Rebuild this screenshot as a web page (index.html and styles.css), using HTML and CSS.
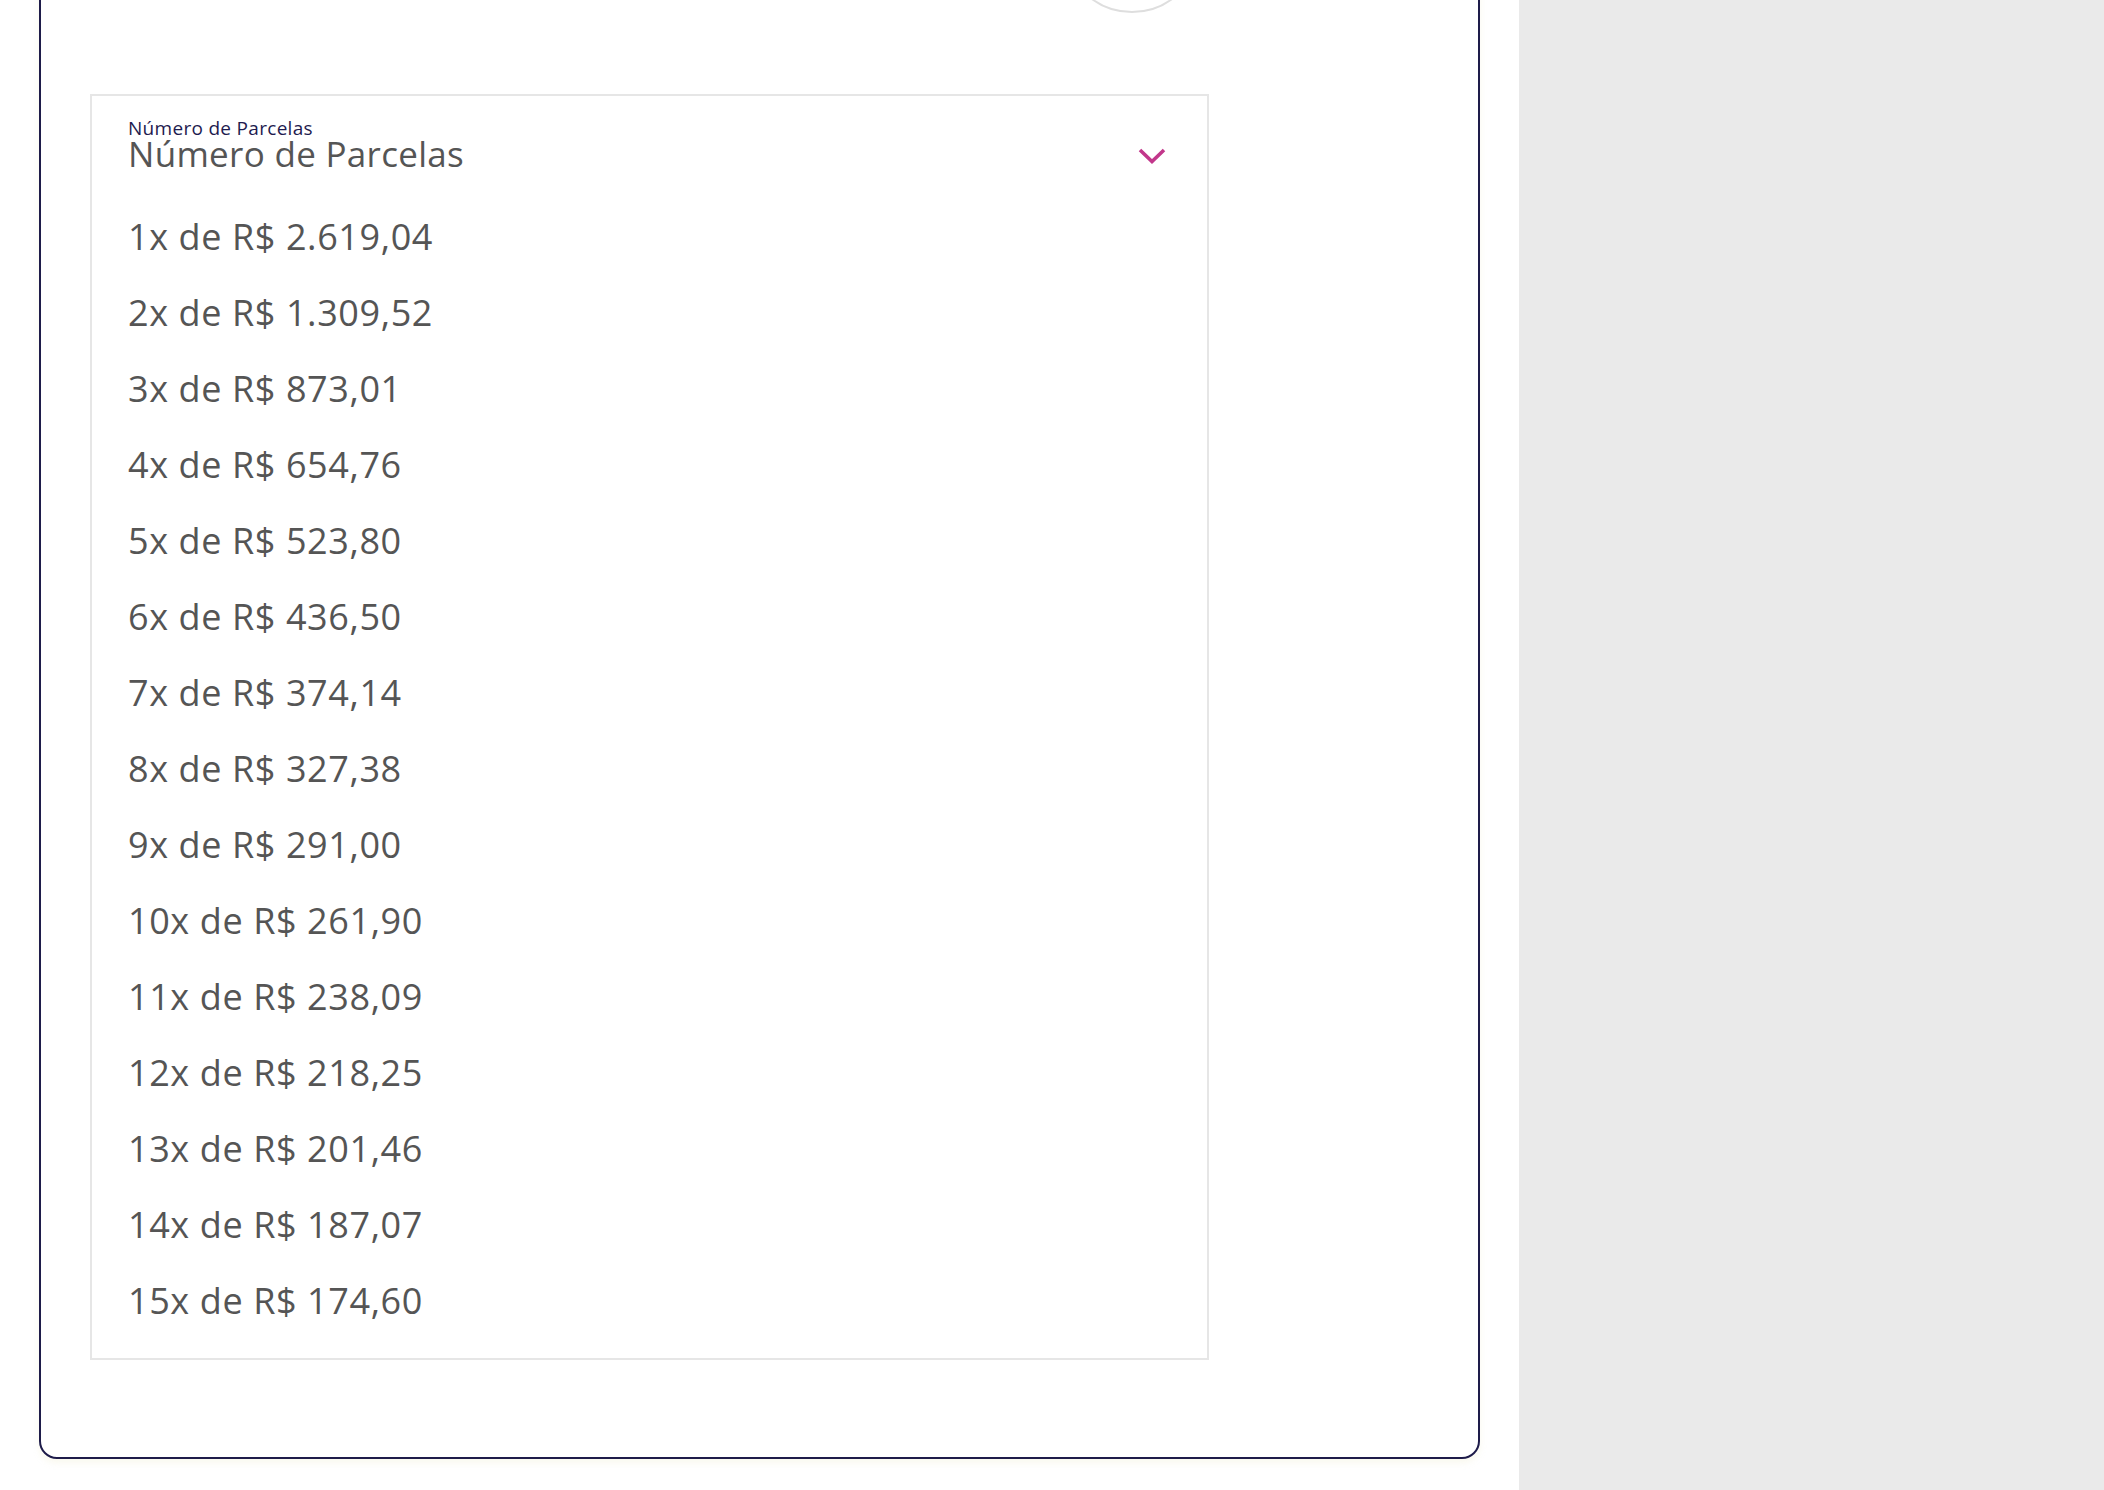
FILE: index.html
```html
<!DOCTYPE html>
<html lang="pt-BR">
<head>
    <meta charset="UTF-8">
    <meta name="viewport" content="width=device-width, initial-scale=1.0">
    <title>Pagamento - Número de Parcelas</title>
    <link rel="stylesheet" href="styles.css">
</head>
<body>
    <div class="page">
        <main class="main-column">
            <!-- Payment card -->
            <section class="payment-card">
                <div class="card-top">
                    <span class="card-badge"></span>
                </div>

                <!-- Installments dropdown (open) -->
                <div class="installments">
                    <div class="installments-header">
                        <div class="installments-labels">
                            <span class="label-small">Número de Parcelas</span>
                            <span class="label-value">Número de Parcelas</span>
                        </div>
                        <svg class="chevron" width="30" height="18" viewBox="0 0 30 18" aria-hidden="true">
                            <path d="M3 3 L15 14.5 L27 3" fill="none" stroke="#c2378b" stroke-width="3.6"/>
                        </svg>
                    </div>

                    <ul class="installments-list">
                        <li class="installment-option">1x de R$ 2.619,04</li>
                        <li class="installment-option">2x de R$ 1.309,52</li>
                        <li class="installment-option">3x de R$ 873,01</li>
                        <li class="installment-option">4x de R$ 654,76</li>
                        <li class="installment-option">5x de R$ 523,80</li>
                        <li class="installment-option">6x de R$ 436,50</li>
                        <li class="installment-option">7x de R$ 374,14</li>
                        <li class="installment-option">8x de R$ 327,38</li>
                        <li class="installment-option">9x de R$ 291,00</li>
                        <li class="installment-option">10x de R$ 261,90</li>
                        <li class="installment-option">11x de R$ 238,09</li>
                        <li class="installment-option">12x de R$ 218,25</li>
                        <li class="installment-option">13x de R$ 201,46</li>
                        <li class="installment-option">14x de R$ 187,07</li>
                        <li class="installment-option">15x de R$ 174,60</li>
                    </ul>
                </div>
            </section>
        </main>

        <!-- Order summary column -->
        <aside class="side-column"></aside>
    </div>
</body>
</html>
```

FILE: styles.css
```css
* {
    margin: 0;
    padding: 0;
    box-sizing: border-box;
}

body {
    font-family: 'Open Sans', 'Noto Sans', sans-serif;
    background: #ffffff;
    color: #555555;
}

.page {
    display: flex;
    height: 1490px;
    overflow: hidden;
}

.main-column {
    width: 1519px;
    flex-shrink: 0;
    padding: 0 39px;
    background: #ffffff;
}

.side-column {
    flex: 1;
    background: #eaeaea;
}

.payment-card {
    margin-top: -200px;
    border: 2px solid #1e1c4a;
    border-radius: 18px;
    padding: 0 0 97px 49px;
    box-shadow: 0 4px 6px rgba(235, 230, 190, 0.25);
}

.card-top {
    display: flex;
    justify-content: flex-end;
    padding: 73px 277px 0 0;
    margin-bottom: 81px;
}

.card-badge {
    width: 138px;
    height: 138px;
    border: 2px solid #dedede;
    border-radius: 50%;
}

.installments {
    width: 1119px;
    border: 2px solid #e6e6e6;
    padding: 21px 40px 19px 36px;
}

.installments-header {
    display: flex;
    justify-content: space-between;
    align-items: flex-end;
}

.installments-labels {
    display: flex;
    flex-direction: column;
}

.label-small {
    font-size: 19px;
    line-height: 22px;
    letter-spacing: 0.3px;
    color: #1e1b4f;
}

.label-value {
    font-size: 35px;
    line-height: 29px;
    letter-spacing: 0.3px;
    color: #555555;
}

.chevron {
    margin-bottom: 3px;
}

.installments-list {
    list-style: none;
    margin-top: 31px;
}

.installment-option {
    font-size: 36px;
    line-height: 76px;
    letter-spacing: 0.6px;
    color: #555555;
}
```
